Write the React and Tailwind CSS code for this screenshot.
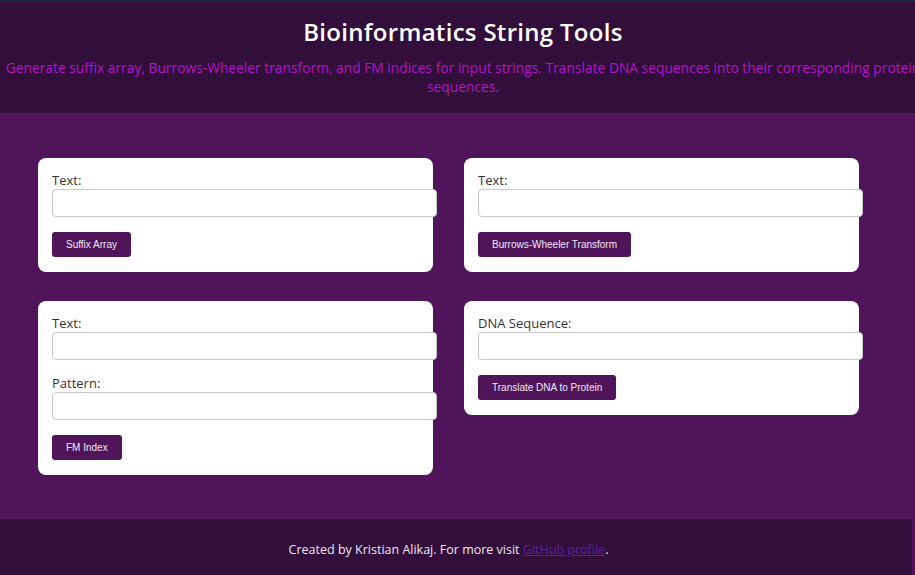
export default function App() {
    const font = { fontFamily: '"Open Sans", "Noto Sans", sans-serif' }

    const Field = ({ label }) => (
        <div className="mb-[15px]">
            <label className="block text-[13px] leading-[17px] text-[#333333]">{label}</label>
            <input
                type="text"
                className="block box-content w-full h-[26px] px-2 border border-[#c9c9c9] rounded-[4px] bg-white outline-none"
            />
        </div>
    )

    const Button = ({ children }) => (
        <button
            className="block h-[25px] px-[14px] rounded-[3px] bg-[#4f1459] text-[#f2e8f5] text-[10px] leading-none"
            style={{ fontFamily: '"Liberation Sans", Arial, sans-serif' }}
        >
            {children}
        </button>
    )

    const Card = ({ children }) => (
        <div className="bg-white rounded-[8px] pt-[14px] pb-[15px] px-[14px]">{children}</div>
    )

    return (
        <div className="w-[915px] h-[575px] overflow-hidden bg-[#4f1459] flex flex-col" style={font}>
            <header className="bg-[#320f3a] border-t-2 border-[#182a33] h-[113px] shrink-0">
                <div className="w-[930px] -ml-[2px] text-center">
                    <h1 className="pt-[14px] text-[24px] leading-[32px] font-semibold tracking-[0.3px] text-white">
                        Bioinformatics String Tools
                    </h1>
                    <p className="mt-[10px] text-[13.8px] leading-[19px] text-[#b414c6]">
                        Generate suffix array, Burrows-Wheeler transform, and FM indices for input strings. Translate DNA sequences into their corresponding protein sequences.
                    </p>
                </div>
            </header>

            <main className="flex-1 pt-[45px] pl-[38px]">
                <div className="grid grid-cols-[395px_395px] gap-x-[31px] gap-y-[29px] items-start">
                    <Card>
                        <Field label="Text:" />
                        <Button>Suffix Array</Button>
                    </Card>
                    <Card>
                        <Field label="Text:" />
                        <Button>Burrows-Wheeler Transform</Button>
                    </Card>
                    <Card>
                        <Field label="Text:" />
                        <Field label="Pattern:" />
                        <Button>FM Index</Button>
                    </Card>
                    <Card>
                        <Field label="DNA Sequence:" />
                        <Button>Translate DNA to Protein</Button>
                    </Card>
                </div>
            </main>

            <footer className="w-[912px] h-[56px] shrink-0 bg-[#320f3a] flex items-center justify-center pt-[6px] pr-[15px]">
                <p className="text-[12.5px] text-[#ede4f0]">
                    Created by Kristian Alikaj. For more visit{' '}
                    <a href="#" className="underline text-[#5a1fa3]">GitHub profile</a>.
                </p>
            </footer>
        </div>
    )
}
